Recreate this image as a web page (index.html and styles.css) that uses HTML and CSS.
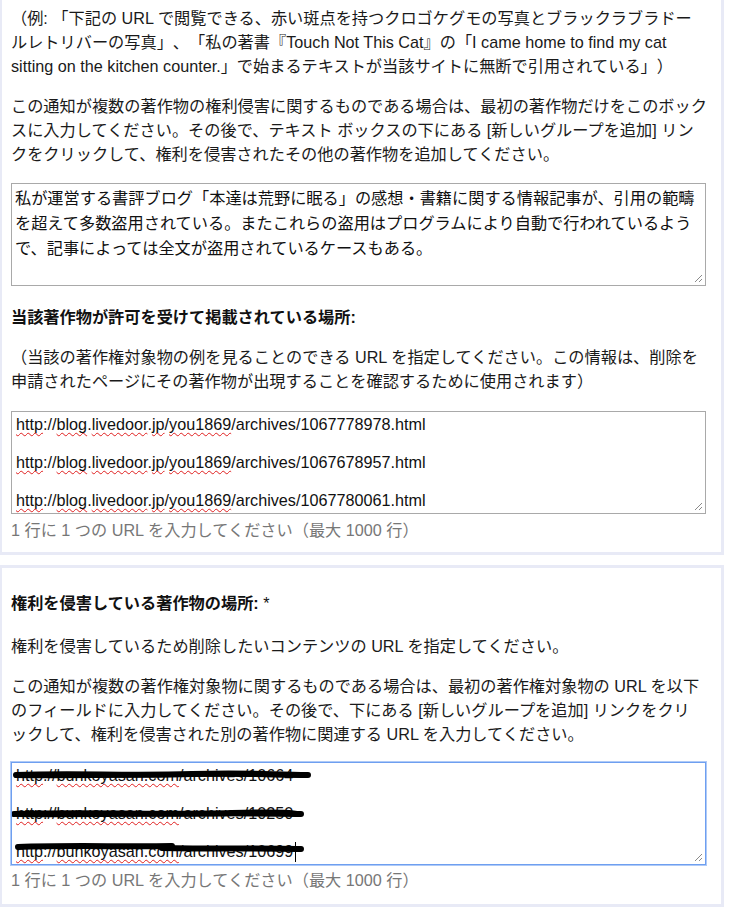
FILE: index.html
```html
<!DOCTYPE html>
<html lang="ja">
<head>
<meta charset="utf-8">
<title>著作権侵害の通知</title>
<link rel="stylesheet" href="styles.css">
</head>
<body>
<div class="page">
  <section class="card card-first">
    <p class="para">（例: 「下記の URL で閲覧できる、赤い斑点を持つクロゴケグモの写真とブラックラブラドー<br>ルレトリバーの写真」、「私の著書『Touch Not This Cat』の「I came home to find my cat<br>sitting on the kitchen counter.」で始まるテキストが当該サイトに無断で引用されている」）</p>
    <p class="para">この通知が複数の著作物の権利侵害に関するものである場合は、最初の著作物だけをこのボック<br>スに入力してください。その後で、テキスト ボックスの下にある [新しいグループを追加] リン<br>クをクリックして、権利を侵害されたその他の著作物を追加してください。</p>
    <div class="textbox textbox-jp">私が運営する書評ブログ「本達は荒野に眠る」の感想・書籍に関する情報記事が、引用の範疇<br>を超えて多数盗用されている。またこれらの盗用はプログラムにより自動で行われているよう<br>で、記事によっては全文が盗用されているケースもある。<svg class="grip" width="9" height="9" viewBox="0 0 9 9"><path d="M8 1 L1 8 M8 5 L5 8" stroke="#8a8a8a" stroke-width="1" fill="none"/></svg></div>
    <h3 class="label">当該著作物が許可を受けて掲載されている場所:</h3>
    <p class="para">（当該の著作権対象物の例を見ることのできる URL を指定してください。この情報は、削除を<br>申請されたページにその著作物が出現することを確認するために使用されます）</p>
    <div class="textbox textbox-url">
      <div class="tline"><span class="sp">http</span>://<span class="sp">blog</span>.<span class="sp">livedoor</span>.<span class="sp">jp</span>/<span class="sp">you1869</span>/archives/1067778978.html</div>
      <div class="tline"></div>
      <div class="tline"><span class="sp">http</span>://<span class="sp">blog</span>.<span class="sp">livedoor</span>.<span class="sp">jp</span>/<span class="sp">you1869</span>/archives/1067678957.html</div>
      <div class="tline"></div>
      <div class="tline"><span class="sp">http</span>://<span class="sp">blog</span>.<span class="sp">livedoor</span>.<span class="sp">jp</span>/<span class="sp">you1869</span>/archives/1067780061.html</div>
      <svg class="grip" width="9" height="9" viewBox="0 0 9 9"><path d="M8 1 L1 8 M8 5 L5 8" stroke="#8a8a8a" stroke-width="1" fill="none"/></svg>
    </div>
    <p class="hint">1 行に 1 つの URL を入力してください（最大 1000 行）</p>
  </section>

  <section class="card card-second">
    <h3 class="label label-top">権利を侵害している著作物の場所: <span class="req">*</span></h3>
    <p class="para">権利を侵害しているため削除したいコンテンツの URL を指定してください。</p>
    <p class="para">この通知が複数の著作権対象物に関するものである場合は、最初の著作権対象物の URL を以下<br>のフィールドに入力してください。その後で、下にある [新しいグループを追加] リンクをクリ<br>ックして、権利を侵害された別の著作物に関連する URL を入力してください。</p>
    <div class="textbox textbox-url textbox-focus">
      <div class="tline"><span class="sp">http</span>://<span class="sp">bunkoyasan.com</span>/archives/10664</div>
      <div class="tline"></div>
      <div class="tline"><span class="sp">http</span>://<span class="sp">bunkoyasan.com</span>/archives/10250</div>
      <div class="tline"></div>
      <div class="tline"><span class="sp">http</span>://<span class="sp">bunkoyasan.com</span>/archives/10699<span class="caret"></span></div>
      <svg class="scribble" width="320" height="100" viewBox="0 0 320 100">
        <path d="M4 12 C60 10 120 13 180 11 S260 12 296 12" stroke="#000" stroke-width="6" stroke-linecap="round" fill="none"/>
        <path d="M4 13 C80 14 160 11 240 12 S285 13 293 11" stroke="#000" stroke-width="4" stroke-linecap="round" fill="none"/>
        <path d="M2 51 C70 49 150 52 220 50 S275 51 289 51" stroke="#000" stroke-width="6" stroke-linecap="round" fill="none"/>
        <path d="M5 52 C90 53 170 50 286 52" stroke="#000" stroke-width="4" stroke-linecap="round" fill="none"/>
        <path d="M6 84 C60 82 110 84 160 83" stroke="#000" stroke-width="6" stroke-linecap="round" fill="none"/>
        <path d="M150 85 C200 86 250 85 289 86" stroke="#000" stroke-width="6" stroke-linecap="round" fill="none"/>
      </svg>
      <svg class="grip" width="9" height="9" viewBox="0 0 9 9"><path d="M8 1 L1 8 M8 5 L5 8" stroke="#8a8a8a" stroke-width="1" fill="none"/></svg>
    </div>
    <p class="hint hint-tight">1 行に 1 つの URL を入力してください（最大 1000 行）</p>
  </section>
</div>
</body>
</html>
```

FILE: styles.css
```css
html, body {
  margin: 0;
  padding: 0;
  background: #ffffff;
}

body {
  font-family: "Liberation Sans", "Noto Sans CJK JP", sans-serif;
  font-size: 16.2px;
  color: #1a1a1a;
  text-spacing-trim: space-all;
  line-break: loose;
}

.page {
  margin-top: -13px;
  margin-left: -1px;
  width: 725px;
  display: flex;
  flex-direction: column;
  gap: 10px;
}

.card {
  box-sizing: border-box;
  width: 725px;
  background: #ffffff;
  border: 3px solid #e8eaf6;
  padding: 16px 4px 10px 9px;
}

.card-second {
  padding-top: 23px;
  padding-bottom: 12px;
}

.para {
  margin: 0 0 16px 0;
  line-height: 24px;
}

.label {
  margin: 19px 0 16px 0;
  font-size: 16.2px;
  font-weight: bold;
  line-height: 24px;
  color: #111111;
}

.label-top {
  margin-top: 0;
  margin-bottom: 19px;
}

.req {
  font-weight: normal;
}

.textbox {
  position: relative;
  box-sizing: border-box;
  width: 695px;
  height: 103px;
  margin-top: 17px;
  border: 1px solid #a9a9a9;
  background: #ffffff;
  color: #111111;
  overflow: hidden;
}

.textbox-jp {
  padding: 2px 4px 2px 3px;
  line-height: 25px;
}

.textbox-url {
  margin-top: 18px;
  padding: 3px 4px 2px 4px;
  line-height: 19px;
}

.textbox-focus {
  margin-top: 16px;
  border-color: #6e9ff0;
  box-shadow: 0 0 0 1px rgba(110, 159, 240, 0.55);
}

.tline {
  height: 19px;
  white-space: nowrap;
}

.sp {
  text-decoration: underline wavy #e02020;
  text-decoration-thickness: 1px;
  text-underline-offset: 2px;
  text-decoration-skip-ink: none;
}

.caret {
  display: inline-block;
  width: 0;
  height: 20px;
  border-left: 1px solid #000;
  vertical-align: -5px;
  margin-left: 2px;
}

.grip {
  position: absolute;
  right: 2px;
  bottom: 2px;
}

.scribble {
  position: absolute;
  left: 0;
  top: 0;
}

.hint {
  margin: 4px 0 0 0;
  line-height: 24px;
  color: #777777;
}

.hint-tight {
  margin-top: 3px;
}
```
